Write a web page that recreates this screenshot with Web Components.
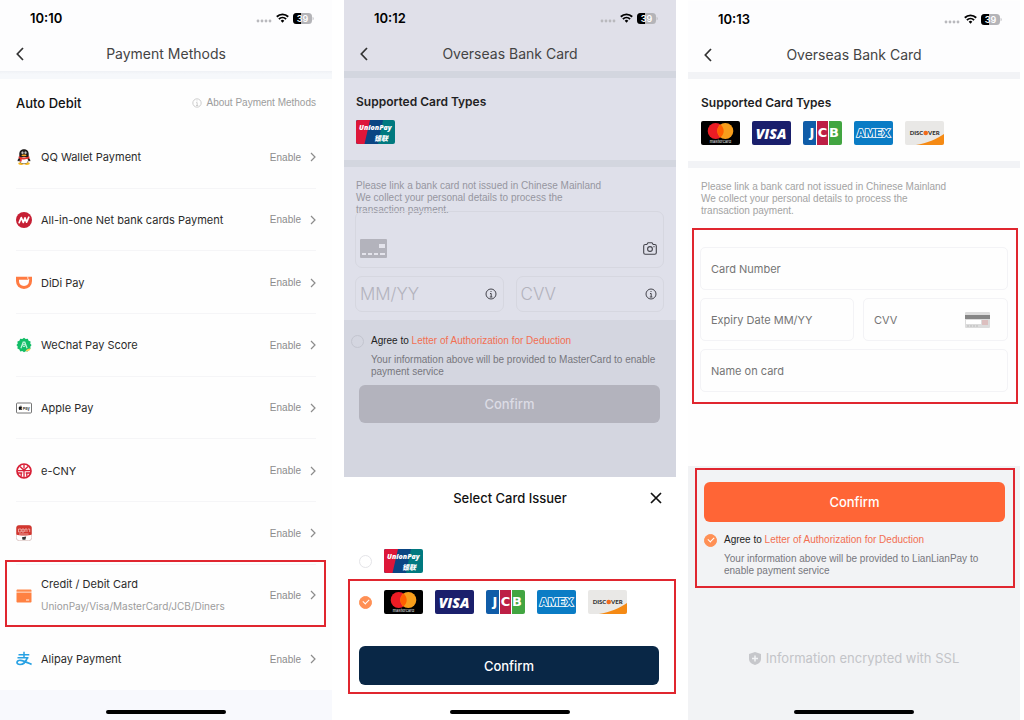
<!DOCTYPE html>
<html lang="en">
<head>
<meta charset="utf-8">
<meta name="viewport" content="width=device-width, initial-scale=1">
<title>Payment Methods</title>
<style>
  body {
    margin: 0;
    background: #fff;
    font-family: Inter, "Liberation Sans", "Noto Sans CJK SC", sans-serif;
    font-size: 11px;
    color: #222;
    --small-font: "Liberation Sans", Arial, sans-serif;
  }

  main {
    display: grid;
    grid-template-columns: repeat(3, 1fr);
    column-gap: 12px;
    padding-right: 4px;
    min-height: 100vh;
  }
</style>
</head>
<body>
<main>
  <methods-screen></methods-screen>
  <issuer-screen></issuer-screen>
  <card-screen></card-screen>
</main>

<script>
  // Icons of the payment methods, all drawn on a 16x16 grid
  const methodIcons = {
    qq: `
      <path d="M3.4 8.400C1.900 10 1.200 11.600 1.800 12.300c.5.3 1.200-.6 1.500-1.100zM12.600 8.400c1.500 1.600 2.200 3.200 1.600 3.900-.5.3-1.200-.6-1.500-1.100z" fill="#222"/>
      <ellipse cx="5.200" cy="14.600" rx="3" ry="1.300" fill="#f5b51c"/><ellipse cx="10.800" cy="14.600" rx="3" ry="1.300" fill="#f5b51c"/>
      <path d="M8 .3C4.700.3 3.300 2.500 3.300 5v2.600C2.500 9 2.500 14.800 8 14.800s5.500-5.800 4.700-7.200V5C12.700 2.500 11.300.3 8 .3z" fill="#1d1a1a"/>
      <ellipse cx="8" cy="11.300" rx="3.900" ry="3.200" fill="#fff"/>
      <path d="M2.800 7.300c3 1.600 7.400 1.600 10.400 0l.3 1.800c-1.800 1-3.800 1.300-5.500 1.300-1 0-1.600 0-2.300-.2v2.300H3.900V9.700l-1.400-.6z" fill="#e5322d"/>
      <ellipse cx="6.500" cy="3.800" rx="1" ry="1.400" fill="#fff"/><ellipse cx="9.500" cy="3.800" rx="1" ry="1.400" fill="#fff"/>
      <circle cx="6.800" cy="4" r=".5" fill="#111"/><circle cx="9.200" cy="4" r=".5" fill="#111"/>
      <ellipse cx="8" cy="6.300" rx="2.600" ry=".9" fill="#f5a623"/>`,
    netbank: `
      <circle cx="8" cy="8" r="8" fill="#c61f34"/>
      <path d="M3.200 10.600 5.300 5.600 7.300 10.400 9 5.800 10.600 10.200 12.800 5.200" fill="none" stroke="#fff" stroke-width="1.700" stroke-linejoin="round" stroke-linecap="round"/>`,
    didi: `
      <path d="M1.500 3.200h13v2.900c0 4-2.600 6.300-6.500 6.300S1.500 10.100 1.500 6.100z" fill="none" stroke="#ff7b42" stroke-width="3"/>
      <path d="M11.800 1.500v1.700c0 1 .5 1.500 1.400 1.500H13" fill="none" stroke="#fff" stroke-width=".8"/>`,
    wechat: `
      <path d="M8 .8l1.700 1.300 2.100-.3.8 2 2 .8-.3 2.100L15.600 8l-1.300 1.700.3 2.100-2 .8-.8 2-2.100-.3L8 15.200l-1.700-1.100-2.100.3-.8-2-2-.8.3-2.100L.4 8l1.300-1.300-.3-2.100 2-.8.8-2 2.100.3z" fill="#12bd67"/>
      <path d="M9.500 14.200c1-2 3-2.900 5-2.600-.4 2-1.800 3-5 2.600z" fill="#f8cf5a"/>
      <path d="M4.900 11.200 7.200 5.200h1.600l2.300 6" fill="none" stroke="#c4f5dc" stroke-width="1.200"/>
      <circle cx="8" cy="8.400" r="1.200" fill="none" stroke="#c4f5dc"/>`,
    apple: `
      <rect x=".5" y="3" width="15" height="10" rx="1" fill="#fff" stroke="#666" stroke-width=".9"/>
      <path d="M5.900 6.700c-.6-.4-1-.2-1.300-.1-.4-.2-1.900-.2-1.900 1.300 0 1.100.7 2.100 1.200 2.100.3 0 .4-.2.7-.2s.4.200.7.200c.4 0 .7-.7.8-1-.8-.4-.8-1.400 0-1.800-.1-.2-.2-.4-.2-.5zM4.500 6.200c0-.6.3-.9.800-1 0 .6-.3.900-.8 1z" fill="#111"/>
      <text x="6.700" y="9.900" font-size="4" font-weight="600" fill="#333">Pay</text>`,
    ecny: `
      <circle cx="8" cy="8" r="7" fill="#fff" stroke="#d81f36" stroke-width="1.700"/>
      <path d="M4 3.500l4 3.800 4-3.800M8 7.300V15M8 1v4.500M2 7.600h12M1.700 10h4.600M9.700 10h4.600M5.200 10v3.600M10.800 10v3.600" fill="none" stroke="#d81f36" stroke-width="1.300"/>`,
    shop: `
      <rect x=".3" y=".3" width="15.400" height="15.400" rx="3" fill="#fff" stroke="#c9a9a6" stroke-width=".6"/>
      <path d="M3.300.3h9.400a3 3 0 0 1 3 3V9.500c-2.500 1.300-12.900 1.300-15.400 0V3.300a3 3 0 0 1 3-3z" fill="#d2362f"/>
      <path d="M2.500 4h2.600v3H2.500zM6 4h2v3H6zM9 7V4h2v3M12 4h1.700v3M3 9h9.500" fill="none" stroke="#f7cdc9" stroke-width=".7"/>
      <path d="M6 12.200l4.200-.8-.8 3.300H6.500z" fill="#333"/>`,
    card: `
      <path d="M.5 3.600c0-.7.500-1.100 1.100-1.100h12.800c.6 0 1.100.4 1.100 1.100V4.800H.5z" fill="#ff8a4c"/>
      <path d="M.5 5.400h15v9c0 .6-.5 1.100-1.100 1.100H1.600c-.6 0-1.100-.5-1.100-1.100z" fill="#ff8142"/>
      <path d="M10 13h3.200" stroke="#fff" stroke-width=".9"/>`,
    alipay: `
      <path d="M2.500 3.800h10.800M8 .8v6M1.500 6.800h11" fill="none" stroke="#27a1e3" stroke-width="1.500"/>
      <path d="M11.300 6.900C9.900 10.800 7 13.500 4 13.500c-1.900 0-3.100-.9-3-2.200.1-1.400 1.600-2.200 3.500-2C8 9.700 12 11.800 15.600 13.400" fill="none" stroke="#27a1e3" stroke-width="1.700"/>`
  };

  // Card brand artwork, 39x24 each
  const cardArt = {
    unionpay: ['UnionPay', `
      <rect width="39" height="24" fill="#00797f"/>
      <path d="M0 0h27l-5 24H0z" fill="#0a4583"/>
      <path d="M0 0h14L8.500 24H0z" fill="#dd1639"/>
      <text x="3" y="10" font-size="7" font-weight="800" font-style="italic" font-family="Open Sans, sans-serif" fill="#fff">UnionPay</text>
      <text x="18" y="21" font-size="7" font-weight="900" font-style="italic" font-family="Noto Sans CJK SC, sans-serif" fill="#fff">银联</text>`],
    mastercard: ['Mastercard', `
      <rect width="39" height="24" fill="#000"/>
      <circle cx="14.700" cy="10" r="8" fill="#eb1c24"/>
      <circle cx="24.300" cy="10" r="8" fill="#f79e1b"/>
      <path d="M19.500 3.600a8 8 0 0 1 0 12.800 8 8 0 0 1 0-12.800z" fill="#ff5f00"/>
      <text x="19.500" y="22" font-size="4" text-anchor="middle" fill="#eee">mastercard</text>`],
    visa: ['Visa', `
      <rect width="39" height="24" fill="#1a1f6c"/>
      <text x="19" y="17.500" font-size="14" font-weight="800" font-style="italic" text-anchor="middle" font-family="Open Sans, sans-serif" fill="#fff">VISA</text>`],
    jcb: ['JCB', `
      <rect width="39" height="24" fill="#fff"/>
      <path d="M0 0h13v24H0z" fill="#0f5ca8"/><path d="M14 0h11v24H14z" fill="#bd1f45"/><path d="M26 0h13v24H26z" fill="#42a541"/>
      <g font-family="DejaVu Sans, sans-serif" font-size="13" font-weight="700" text-anchor="middle" fill="#fff">
        <text x="9" y="16">J</text><text x="19.500" y="16">C</text><text x="31" y="16">B</text>
      </g>`],
    amex: ['Amex', `
      <rect width="39" height="24" fill="#0a7cc5"/>
      <text x="19.500" y="16" font-size="11" font-weight="800" text-anchor="middle" fill="#0a7cc5" stroke="#fff" stroke-width="1.600" paint-order="stroke">AMEX</text>`],
    discover: ['Discover', `
      <rect width="39" height="24" fill="#e9e8e6"/>
      <path d="M39 13c-7 5-17 9-28 11h28z" fill="#f58a14"/>
      <g font-family="Lato, sans-serif" font-size="6" font-weight="900" fill="#333">
        <text x="18.300" y="14.200" text-anchor="end">DISC</text><text x="23" y="14.200">VER</text>
      </g>
      <circle cx="20.700" cy="12" r="2.300" fill="#f26a1b"/>`]
  };

  const infoIcon = `<svg viewBox="0 0 12 12" width="12" height="12" fill="none" stroke="currentColor"><circle cx="6" cy="6" r="5"/><path d="M6 3v1M5 5.500h1.200V9M4.800 9h2.600"/></svg>`;

  // Shared by every shadow root
  const baseStyle = `
    :host { display: block; }
    *, *::before, *::after { box-sizing: border-box; }
    svg { display: block; flex: none; }
    a { color: inherit; text-decoration: none; }
    button { border: none; background: none; padding: 0; margin: 0; font: inherit; color: inherit; cursor: pointer; }
    input { margin: 0; font: inherit; color: inherit; }
    .tick {
      appearance: none;
      flex: none;
      display: grid;
      place-items: center;
      width: 13px;
      height: 13px;
      border: 1px solid var(--tick-line, #e4e4e8);
      border-radius: 50%;
    }
    .tick:checked { background: #ff9055; border-color: #ff9055; }
    .tick:checked::after {
      content: '';
      width: 6px;
      height: 4px;
      margin-bottom: 2px;
      border: solid #fff;
      border-width: 0 0 1px 1px;
      transform: rotate(-45deg);
    }
  `;

  class BaseElement extends HTMLElement {
    constructor() {
      super();
      this.attachShadow({ mode: 'open' });
    }

    connectedCallback() {
      this.render();
    }

    paint(style, markup) {
      this.shadowRoot.innerHTML = `<style>${baseStyle}${style}</style>${markup}`;
    }
  }

  class PhoneHeader extends BaseElement {
    render() {
      this.paint(`
        :host { background: var(--header-bg, #fdfdfe); }
        .status {
          display: flex;
          align-items: center;
          gap: 4px;
          height: 36px;
          padding: 0 18px 0 30px;
          color: #000;
        }
        time { flex: 1; font-size: 13px; font-weight: 600; }
        .nav {
          display: grid;
          grid-template-columns: 32px 1fr 32px;
          align-items: center;
          height: 35px;
        }
        .nav button { display: flex; justify-content: flex-end; padding-right: 8px; color: #333; }
        h1 {
          margin: 0;
          font-size: 14px;
          font-weight: 400;
          text-align: center;
          color: #444;
        }
      `, `
        <div class="status">
          <time>${this.getAttribute('time')}</time>
          <svg viewBox="0 0 16 12" width="16" height="12" fill="#b9b9bd"><circle cx="2" cy="9" r="1.400"/><circle cx="6" cy="9" r="1.400"/><circle cx="10" cy="9" r="1.400"/><circle cx="14" cy="9" r="1.400"/></svg>
          <svg viewBox="0 0 13 10" width="13" height="10" fill="none" stroke="#000" stroke-width="1.900"><path d="M.8 3.700a8.200 8.200 0 0 1 11.400 0M2.900 6.100a5.200 5.200 0 0 1 7.200 0"/><path d="M4.700 7.700a2.600 2.600 0 0 1 3.600 0L6.500 9.700z" fill="#000" stroke="none"/></svg>
          <svg viewBox="0 0 21 11" width="21" height="11">
            <rect width="19" height="11" rx="3.500" fill="#b4b4b8"/>
            <path d="M8 0v11H3.500A3.500 3.500 0 0 1 0 7.500v-4A3.500 3.500 0 0 1 3.500 0z" fill="#000"/>
            <path d="M19.700 3.700c1.200.5 1.200 3.100 0 3.600z" fill="#b4b4b8"/>
            <text x="9.500" y="9" font-size="9" font-weight="600" text-anchor="middle" fill="#fff">39</text>
          </svg>
        </div>
        <div class="nav">
          <button type="button" aria-label="Back"><svg viewBox="0 0 8 14" width="8" height="14" fill="none" stroke="currentColor" stroke-width="1.700"><path d="M7 1 1.300 7 7 13"/></svg></button>
          <h1><slot></slot></h1>
        </div>
      `);
    }
  }

  class HomeBar extends BaseElement {
    render() {
      this.paint(`
        :host { padding-bottom: 6px; }
        div { width: 36%; height: 4px; margin: 0 auto; border-radius: 2px; background: #000; }
      `, `<div></div>`);
    }
  }

  class CardLogo extends BaseElement {
    render() {
      const [name, art] = cardArt[this.getAttribute('brand')];
      this.paint(`
        :host { flex: none; width: 39px; height: 24px; border-radius: 2px; overflow: hidden; }
      `, `<svg viewBox="0 0 39 24" width="39" height="24" role="img" aria-label="${name}">${art}</svg>`);
    }
  }

  // Red frame around the part of a screen that the guide talks about
  class MarkedArea extends BaseElement {
    render() {
      this.paint(`:host { border: 2px solid #e0262f; }`, `<slot></slot>`);
    }
  }

  class PaymentRow extends BaseElement {
    render() {
      const note = this.getAttribute('note');
      const frame = this.hasAttribute('marked') ? 'marked-area' : 'div';
      this.paint(`
        :host { display: grid; border-bottom: 1px solid #f5f5f7; }
        :host(:last-of-type), :host([marked]) { border-bottom: none; }
        :host([marked]) .frame { margin: -5px -10px 0 -11px; padding: 3px 8px 0 9px; }
        .frame { display: grid; }
        .row { display: flex; align-items: center; gap: 9px; padding-top: 1px; }
        .text { flex: 1; display: grid; gap: 8px; color: #2b2b2b; }
        .name { line-height: 14px; }
        .note { font-size: 10px; line-height: 14px; color: #9c9c9c; }
        a { display: flex; align-items: center; gap: 9px; font-family: var(--small-font); font-size: 10px; color: #8c8c8c; }
      `, `
        <${frame} class="frame">
          <div class="row">
            <svg viewBox="0 0 16 16" width="16" height="16">${methodIcons[this.getAttribute('icon')]}</svg>
            <div class="text">
              <span class="name"><slot></slot></span>
              ${note ? `<span class="note">${note}</span>` : ''}
            </div>
            <a href="#">Enable <svg viewBox="0 0 6 10" width="6" height="10" fill="none" stroke="currentColor" stroke-width="1.200"><path d="M1 1l4 4-4 4"/></svg></a>
          </div>
        </${frame}>
      `);
    }
  }

  class CardTypes extends BaseElement {
    render() {
      const brands = this.getAttribute('brands').split(' ');
      this.paint(`
        :host {
          padding: 15px 13px 16px var(--inset, 13px);
          border: solid var(--band, #f2f3f6);
          border-width: 7px 0;
        }
        h2 { margin: 0 0 9px; font-size: 12px; line-height: 18px; font-weight: 600; color: #1f1f24; }
        div { display: flex; gap: 12px; }
      `, `
        <h2>Supported Card Types</h2>
        <div>${brands.map((brand) => `<card-logo brand="${brand}"></card-logo>`).join('')}</div>
      `);
    }
  }

  class CardNotice extends BaseElement {
    render() {
      this.paint(`
        :host {
          padding: 13px 13px 0 var(--inset, 13px);
          font-family: var(--small-font);
          font-size: 10px;
          line-height: 12px;
          color: var(--notice, #a3a3a3);
        }
        p { margin: 0; }
      `, `
        <p>Please link a bank card not issued in Chinese Mainland<br>We collect your personal details to process the<br>transaction payment.</p>
      `);
    }
  }

  class CardField extends BaseElement {
    render() {
      const label = this.getAttribute('label');
      const hint = this.getAttribute('placeholder') || '';
      this.paint(`
        :host {
          display: flex;
          align-items: center;
          min-width: 0;
          border: 1px solid var(--field-line, #f3f3f6);
          border-radius: var(--field-radius, 5px);
        }
        input {
          flex: 1;
          min-width: 0;
          align-self: stretch;
          border: none;
          background: none;
          padding: 0;
          outline: none;
        }
        input::placeholder { color: var(--placeholder, #757575); opacity: 1; }
      `, `
        <slot name="start"></slot>
        <input type="text" aria-label="${label}" placeholder="${hint}">
        <slot name="end"></slot>
      `);
    }
  }

  class AgreeLine extends BaseElement {
    render() {
      this.paint(`
        :host { font-family: var(--small-font); font-size: 10px; }
        .line { display: flex; align-items: center; gap: 7px; line-height: 14px; color: #222; }
        a { color: #f26f52; }
        p { margin: 6px 0 0 20px; line-height: 12px; color: #77777d; }
      `, `
        <div class="line">
          <input class="tick" id="agree" type="checkbox" ${this.hasAttribute('checked') ? 'checked' : ''}>
          <span><label for="agree">Agree to</label> <a href="#">Letter of Authorization for Deduction</a></span>
        </div>
        <p><slot></slot></p>
      `);
    }
  }

  class ConfirmButton extends BaseElement {
    render() {
      this.paint(`
        button {
          width: 100%;
          height: var(--button-height, 38px);
          border-radius: 6px;
          background: var(--button-bg, #ff6536);
          color: var(--button-text, #fff);
          font-size: 13px;
          font-weight: 500;
        }
      `, `<button type="button">Confirm</button>`);
    }
  }

  class MethodsScreen extends BaseElement {
    render() {
      this.paint(`
        :host { display: flex; flex-direction: column; background: #fefefe; }
        .band { height: 8px; background: linear-gradient(#eff1f5, #f6f8fb 40%); }
        .head {
          display: flex;
          align-items: center;
          justify-content: space-between;
          height: 47px;
          padding: 0 16px;
        }
        h2 { margin: 0; font-size: 13px; font-weight: 500; color: #111; }
        .head a { display: flex; align-items: center; gap: 4px; font-family: var(--small-font); font-size: 10px; color: #9c9c9c; }
        .head svg { width: 10px; height: 10px; color: #c4c4c4; }
        .list {
          flex: 1;
          display: grid;
          grid-auto-rows: 1fr;
          padding: 0 16px;
        }
        home-bar { padding-top: 20px; background: #f8f9fd; }
      `, `
        <phone-header time="10:10">Payment Methods</phone-header>
        <div class="band"></div>
        <div class="head">
          <h2>Auto Debit</h2>
          <a href="#">${infoIcon} About Payment Methods</a>
        </div>
        <div class="list">
          <payment-row icon="qq">QQ Wallet Payment</payment-row>
          <payment-row icon="netbank">All-in-one Net bank cards Payment</payment-row>
          <payment-row icon="didi">DiDi Pay</payment-row>
          <payment-row icon="wechat">WeChat Pay Score</payment-row>
          <payment-row icon="apple">Apple Pay</payment-row>
          <payment-row icon="ecny">e-CNY</payment-row>
          <payment-row icon="shop"></payment-row>
          <payment-row icon="card" note="UnionPay/Visa/MasterCard/JCB/Diners" marked>Credit / Debit Card</payment-row>
          <payment-row icon="alipay">Alipay Payment</payment-row>
        </div>
        <home-bar></home-bar>
      `);
    }
  }

  class IssuerSheet extends BaseElement {
    render() {
      this.paint(`
        :host { background: #fff; }
        header {
          display: grid;
          grid-template-columns: 40px 1fr 40px;
          align-items: center;
          height: 42px;
        }
        h2 { grid-column: 2; margin: 0; text-align: center; font-size: 13px; font-weight: 500; color: #111; }
        header button { display: grid; place-items: center; color: #111; }
        .option { display: flex; align-items: center; gap: 12px; }
        .option label { display: flex; gap: 12px; }
        .first { padding: 30px 15px 6px; }
        marked-area { margin: 0 0 16px 4px; padding: 9px 15px 7px 9px; }
        confirm-button {
          margin-top: 32px;
          --button-height: 39px;
          --button-bg: #092746;
        }
      `, `
        <header>
          <h2>Select Card Issuer</h2>
          <button type="button" aria-label="Close"><svg viewBox="0 0 12 12" width="12" height="12" stroke="currentColor" stroke-width="1.700"><path d="M1 1l10 10M11 1L1 11"/></svg></button>
        </header>
        <div class="option first">
          <input class="tick" type="radio" name="issuer" id="domestic">
          <label for="domestic"><card-logo brand="unionpay"></card-logo></label>
        </div>
        <marked-area>
          <div class="option">
            <input class="tick" type="radio" name="issuer" id="overseas" checked>
            <label for="overseas">
              <card-logo brand="mastercard"></card-logo>
              <card-logo brand="visa"></card-logo>
              <card-logo brand="jcb"></card-logo>
              <card-logo brand="amex"></card-logo>
              <card-logo brand="discover"></card-logo>
            </label>
          </div>
          <confirm-button></confirm-button>
        </marked-area>
        <home-bar></home-bar>
      `);
    }
  }

  class IssuerScreen extends BaseElement {
    render() {
      this.paint(`
        :host {
          display: flex;
          flex-direction: column;
          background: #dfe0ea;
          --inset: 12px;
          --header-bg: #e0e0e9;
          --band: #d3d6df;
          --notice: #9696a0;
          --field-line: #d6d7e0;
          --field-radius: 7px;
          --placeholder: #b3b3bd;
        }
        .form {
          display: grid;
          grid-template-columns: 1fr 1fr;
          gap: 8px 12px;
          margin-top: -5px;
          padding: 0 12px 8px 11px;
        }
        card-field { height: 36px; padding: 0 6px 0 4px; font-size: 17px; font-weight: 300; }
        card-field svg { color: #44444c; }
        .number { grid-column: 1 / -1; height: 57px; padding-top: 18px; }
        .agree {
          flex: 1;
          padding: 14px 8px 0 7px;
          background: #d4d6e0;
          --tick-line: #c3c5cf;
        }
        .agree confirm-button {
          margin: 7px 8px 0;
          --button-bg: #b3b3bd;
          --button-text: #dcdce5;
        }
      `, `
        <phone-header time="10:12">Overseas Bank Card</phone-header>
        <card-types brands="unionpay"></card-types>
        <card-notice></card-notice>
        <div class="form">
          <card-field class="number" label="Card number">
            <svg slot="start" viewBox="0 0 27 19" width="27" height="19"><rect width="27" height="19" rx="1" fill="#b3b3bc"/><path d="M19 5h6v4h-6zM2 14h4v2H2zM8 14h4v2H8zM14 14h4v2h-4zM20 14h5v2h-5z" fill="#e4e4ec"/></svg>
            <svg slot="end" viewBox="0 0 14 13" width="14" height="13" fill="none" stroke="currentColor" stroke-width="1.100"><path d="M2.300 2.500h1.500L5 .8h4l1.200 1.700h1.500c.9 0 1.600.6 1.600 1.500v6.700c0 .9-.7 1.500-1.600 1.500H2.300c-.9 0-1.600-.6-1.600-1.500V4c0-.9.7-1.500 1.600-1.500z"/><circle cx="7" cy="7" r="2.400"/><path d="M10.500 4.600h1"/></svg>
          </card-field>
          <card-field label="Expiry date" placeholder="MM/YY"><span slot="end">${infoIcon}</span></card-field>
          <card-field label="CVV" placeholder="CVV"><span slot="end">${infoIcon}</span></card-field>
        </div>
        <div class="agree">
          <agree-line>Your information above will be provided to MasterCard to enable payment service</agree-line>
          <confirm-button></confirm-button>
        </div>
        <issuer-sheet></issuer-sheet>
      `);
    }
  }

  class CardScreen extends BaseElement {
    render() {
      this.paint(`
        :host {
          display: flex;
          flex-direction: column;
          padding-top: 1px;
          background: #fefefe;
        }
        .form { flex: 1; }
        .form marked-area {
          display: grid;
          grid-template-columns: 17fr 16fr;
          gap: 8px 9px;
          margin: 11px 2px 0 4px;
          padding: 17px 8px 10px 6px;
        }
        card-field { height: 43px; padding: 0 17px 0 10px; font-size: 11px; }
        .wide { grid-column: 1 / -1; }
        .foot { padding-top: 2px; background: #f2f3f5; }
        .foot marked-area { margin: 0 5px 0 7px; padding: 12px 8px 9px 7px; }
        confirm-button { margin-bottom: 11px; --button-height: 40px; }
        .foot agree-line { padding-right: 8px; }
        .ssl {
          display: flex;
          align-items: center;
          justify-content: center;
          gap: 5px;
          margin: 60px 0 42px;
          font-size: 13px;
          line-height: 20px;
          color: #c3c4c8;
        }
      `, `
        <phone-header time="10:13">Overseas Bank Card</phone-header>
        <card-types brands="mastercard visa jcb amex discover"></card-types>
        <div class="form">
          <card-notice></card-notice>
          <marked-area>
            <card-field class="wide" label="Card Number" placeholder="Card Number"></card-field>
            <card-field label="Expiry Date" placeholder="Expiry Date MM/YY"></card-field>
            <card-field label="CVV" placeholder="CVV">
              <svg slot="end" viewBox="0 0 25 16" width="25" height="16"><rect width="25" height="16" rx="1" fill="#dcdcdc"/><path d="M0 3h25v4H0z" fill="#858585"/><path d="M1 8h15v4H1z" fill="#fff"/><path d="M17 8h6v5h-6z" fill="#dcbfbf"/><path d="M2 14h11" stroke="#bbb" stroke-dasharray="2 1"/></svg>
            </card-field>
            <card-field class="wide" label="Name on card" placeholder="Name on card"></card-field>
          </marked-area>
        </div>
        <div class="foot">
          <marked-area>
            <confirm-button></confirm-button>
            <agree-line checked>Your information above will be provided to LianLianPay to enable payment service</agree-line>
          </marked-area>
          <div class="ssl">
            <svg viewBox="0 0 12 13" width="12" height="13"><path d="M6 0l6 2v5c0 3-2.500 5-6 6-3.500-1-6-3-6-6V2z" fill="#c6c7cb"/><path d="M6 3.500v6M3 6.500h6" stroke="#f2f3f5" stroke-width="1.500"/></svg>
            Information encrypted with SSL
          </div>
          <home-bar></home-bar>
        </div>
      `);
    }
  }

  customElements.define('phone-header', PhoneHeader);
  customElements.define('home-bar', HomeBar);
  customElements.define('card-logo', CardLogo);
  customElements.define('marked-area', MarkedArea);
  customElements.define('payment-row', PaymentRow);
  customElements.define('card-types', CardTypes);
  customElements.define('card-notice', CardNotice);
  customElements.define('card-field', CardField);
  customElements.define('agree-line', AgreeLine);
  customElements.define('confirm-button', ConfirmButton);
  customElements.define('issuer-sheet', IssuerSheet);
  customElements.define('methods-screen', MethodsScreen);
  customElements.define('issuer-screen', IssuerScreen);
  customElements.define('card-screen', CardScreen);
</script>
</body>
</html>
